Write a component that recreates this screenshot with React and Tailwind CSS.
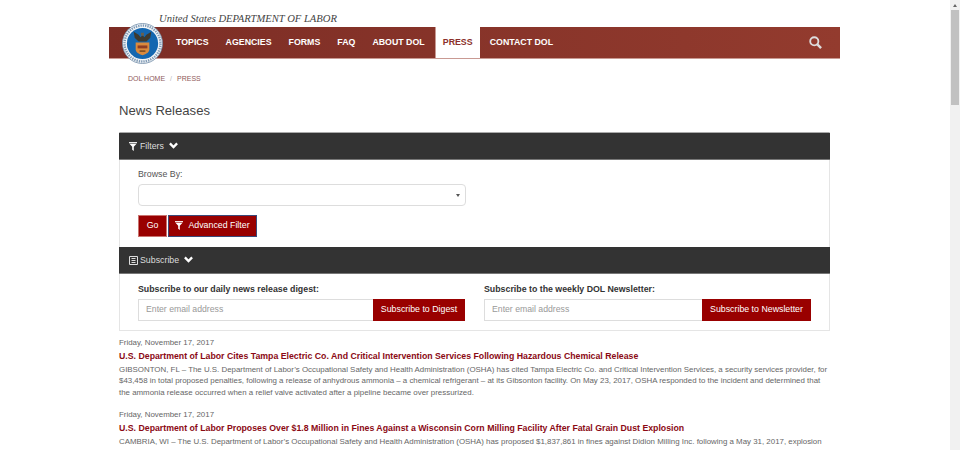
const navItems = ['TOPICS', 'AGENCIES', 'FORMS', 'FAQ', 'ABOUT DOL'];

const FunnelIcon = ({ className }) => (
  <svg viewBox="0 0 10 11" className={className} fill="currentColor">
    <path d="M0 0h10v1.4H0z" />
    <path d="M0.6 2.2h8.8L6 5.8V11L4 9.6V5.8z" />
  </svg>
);

const Chevron = () => (
  <svg viewBox="0 0 10 7" className="w-[9px] h-[7px] mb-[2px] text-white" fill="none" stroke="currentColor" strokeWidth="2.6">
    <path d="M1 1.2l4 4 4-4" />
  </svg>
);

const Seal = () => (
  <svg viewBox="0 0 42 42" className="w-[41px] h-[41px]">
    <circle cx="21" cy="21" r="20.5" fill="#f4f6f8" stroke="#6d8aa6" strokeWidth="0.8" />
    <circle cx="21" cy="21" r="18.4" fill="none" stroke="#7f9ab5" strokeWidth="2.4" strokeDasharray="1.4 1" />
    <circle cx="21" cy="21" r="16" fill="#1467b0" />
    <path d="M12 9l5 3 2 2.5 2-2 2 2 2-2.5 5-3-1 6-4 4h-8l-4-4z" fill="#3e3a2e" />
    <path d="M19.5 10h3v3h-3z" fill="#6b604a" />
    <path d="M14 20h14v7c0 3-3 5-7 6-4-1-7-3-7-6z" fill="#d98a3d" />
    <path d="M16 23h10v3H16z" fill="#8f3d24" />
    <path d="M18 28h6v1.6h-6z" fill="#7a4a20" />
  </svg>
);

const Panel = ({ children }) => (
  <div className="-mx-[1px] h-[27px] bg-[#333333] border-b border-[#777777] flex items-center pl-[10px] gap-[5px] text-[#dddddd] text-[8.8px]">
    {children}
  </div>
);

const SubscribeForm = ({ label, button, buttonWidth }) => (
  <div className="w-[327px]">
    <p className="text-[8.8px] leading-[12px] font-bold text-[#333333] mb-[4px]">{label}</p>
    <div className="flex h-[22px]">
      <div className="flex-1 border border-[#dddddd] border-r-0 pl-[7px] flex items-center text-[8.7px] text-[#999999]">
        Enter email address
      </div>
      <div className={`${buttonWidth} bg-[#990000] text-white text-[8.8px] whitespace-nowrap flex items-center justify-center`}>
        {button}
      </div>
    </div>
  </div>
);

const Release = ({ title, children, className }) => (
  <div className={className}>
    <p className="text-[7.9px] leading-[12px] text-[#666666]">Friday, November 17, 2017</p>
    <h3 className="text-[8.75px] leading-[12px] font-bold text-[#8b0a14] mt-[1px] mb-[2px]">{title}</h3>
    <p className="text-[7.9px] leading-[11.25px] text-[#666666]">{children}</p>
  </div>
);

export default function App() {
  return (
    <div className="flex h-[450px] overflow-hidden bg-white font-['Liberation_Sans',Arial,sans-serif]">
      <main className="flex-1 min-w-0 pl-[109px] pr-[110px]">
        {/* Header */}
        <div className="h-[27px] pl-[50px] pt-[12px] font-['Liberation_Serif',serif] italic text-[10.6px] leading-[13px] text-[#444444]">
          United States DEPARTMENT OF LABOR
        </div>
        <nav className="relative h-[32px] flex border-b border-[#c99a93] bg-gradient-to-r from-[#7c2d25] to-[#933b2e] text-white text-[8.8px] font-bold pl-[67px]">
          <div className="absolute left-[13px] top-[-4px]">
            <Seal />
          </div>
          <div className="flex gap-[17px] mr-[10px]">
            {navItems.map((item) => (
              <a key={item} className="flex items-center">{item}</a>
            ))}
          </div>
          <a className="w-[45px] bg-white text-[#8b2f2a] flex items-center justify-center border-l border-[#c99a93]">PRESS</a>
          <a className="flex items-center ml-[10px]">CONTACT DOL</a>
          <svg viewBox="0 0 14 14" className="absolute right-[18px] top-[9px] w-[13px] h-[13px] text-[#dddddd]" fill="none" stroke="currentColor">
            <circle cx="5.7" cy="5.7" r="4.4" strokeWidth="2" />
            <path d="M9 9l4 4" strokeWidth="2.6" />
          </svg>
        </nav>

        {/* Breadcrumb */}
        <div className="pl-[19px] mt-[15px] h-[11px] flex items-center text-[7px] text-[#8f5a5a]">
          <span>DOL HOME</span>
          <span className="mx-[5px] text-[#bbbbbb]">/</span>
          <span>PRESS</span>
        </div>

        <h1 className="pl-[10px] mt-[18px] text-[13.1px] leading-[16px] text-[#444444]">News Releases</h1>

        {/* Filters and subscribe box */}
        <section className="mx-[10px] mt-[13px] border border-[#e5e5e5] border-t-[#aaaaaa]">
          <Panel>
            <span className="flex items-center gap-[3px] pt-[1px]">
              <FunnelIcon className="w-[8px] h-[9px] text-white" />
              <span>Filters</span>
            </span>
            <Chevron />
          </Panel>
          <div className="pl-[18px] pt-[9px] pb-[10px]">
            <label className="block text-[8.8px] leading-[11px] text-[#555555] mb-[4px]">Browse By:</label>
            <div className="w-[328px] h-[22px] border border-[#dddddd] rounded-[4px] flex items-center justify-end pr-[5px]">
              <span className="w-0 h-0 border-x-[2px] border-x-transparent border-t-[3px] border-t-[#555555]" />
            </div>
            <div className="flex gap-[1px] mt-[9px]">
              <button className="w-[29px] h-[22px] bg-[#990000] text-white text-[8.8px] border border-[#c9736f]">Go</button>
              <button className="w-[89px] h-[22px] bg-[#990000] text-white text-[8.8px] whitespace-nowrap border border-[#3a4a7a] flex items-center justify-center gap-[5px]">
                <FunnelIcon className="w-[8px] h-[9px] mb-[2px]" />
                Advanced Filter
              </button>
            </div>
          </div>
          <Panel>
            <span className="flex items-center gap-[2px] pt-[1px]">
              <svg viewBox="0 0 9 9" className="w-[9px] h-[9px]" fill="none" stroke="currentColor">
                <path d="M0.5 0.5h8v8h-8z" />
                <path d="M2.5 2.5h4M2.5 4.5h4M2.5 6.5h4" />
              </svg>
              <span>Subscribe</span>
            </span>
            <Chevron />
          </Panel>
          <div className="flex pl-[18px] pt-[9px] pb-[9px] gap-[19px]">
            <SubscribeForm label="Subscribe to our daily news release digest:" button="Subscribe to Digest" buttonWidth="w-[92px]" />
            <SubscribeForm label="Subscribe to the weekly DOL Newsletter:" button="Subscribe to Newsletter" buttonWidth="w-[109px]" />
          </div>
        </section>

        {/* Releases */}
        <div className="px-[10px] mt-[6px]">
          <Release title="U.S. Department of Labor Cites Tampa Electric Co. And Critical Intervention Services Following Hazardous Chemical Release">
            GIBSONTON, FL – The U.S. Department of Labor’s Occupational Safety and Health Administration (OSHA) has cited Tampa Electric Co. and Critical Intervention Services, a security services provider, for $43,458 in total proposed penalties, following a release of anhydrous ammonia – a chemical refrigerant – at its Gibsonton facility. On May 23, 2017, OSHA responded to the incident and determined that the ammonia release occurred when a relief valve activated after a pipeline became over pressurized.
          </Release>
          <Release className="mt-[11px]" title="U.S. Department of Labor Proposes Over $1.8 Million in Fines Against a Wisconsin Corn Milling Facility After Fatal Grain Dust Explosion">
            CAMBRIA, WI – The U.S. Department of Labor’s Occupational Safety and Health Administration (OSHA) has proposed $1,837,861 in fines against Didion Milling Inc. following a May 31, 2017, explosion
          </Release>
        </div>
      </main>

      {/* Scrollbar */}
      <aside className="w-[10px] shrink-0 bg-[#f1f1f1] flex flex-col items-center">
        <div className="h-[10px] flex items-center">
          <span className="w-0 h-0 border-x-[2.5px] border-x-transparent border-b-[3px] border-b-[#666666]" />
        </div>
        <div className="w-[8px] h-[95px] bg-[#c1c1c1]" />
      </aside>
    </div>
  );
}
